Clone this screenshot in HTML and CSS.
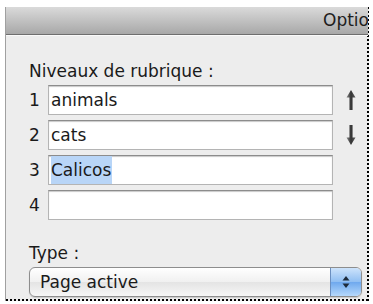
FILE: index.html
```html
<!DOCTYPE html>
<html lang="fr">
<head>
    <meta charset="UTF-8">
    <meta name="viewport" content="width=device-width, initial-scale=1.0">
    <title>Options</title>
    <link rel="stylesheet" href="styles.css">
</head>
<body>
    <div class="frame">
        <div class="header">Options</div>
        <div class="panel">
            <p class="label">Niveaux de rubrique :</p>
            <div class="levels">
                <span class="num">1</span>
                <div class="field">animals</div>
                <svg class="arrow" width="10" height="22" viewBox="0 0 10 22">
                    <defs>
                        <linearGradient id="ag1" x1="0" x2="1" y1="0" y2="0">
                            <stop offset="0" stop-color="#8a8a8a"/>
                            <stop offset="0.5" stop-color="#333"/>
                            <stop offset="1" stop-color="#5e5e5e"/>
                        </linearGradient>
                    </defs>
                    <path d="M5 1 L9.5 8.5 L6.6 8.5 L6.6 21 L3.4 21 L3.4 8.5 L0.5 8.5 Z" fill="url(#ag1)"/>
                </svg>

                <span class="num">2</span>
                <div class="field">cats</div>
                <svg class="arrow" width="10" height="22" viewBox="0 0 10 22">
                    <path d="M5 21 L9.5 13.5 L6.6 13.5 L6.6 1 L3.4 1 L3.4 13.5 L0.5 13.5 Z" fill="url(#ag1)"/>
                </svg>

                <span class="num">3</span>
                <div class="field"><span class="selected">Calicos</span></div>
                <span></span>

                <span class="num">4</span>
                <div class="field"></div>
                <span></span>
            </div>

            <p class="label type-label">Type :</p>
            <div class="select">
                <span class="select-text">Page active</span>
                <span class="stepper">
                    <svg width="10" height="16" viewBox="0 0 10 16">
                        <path d="M5 2 L8.5 6.5 L1.5 6.5 Z" fill="#1d2a3a"/>
                        <path d="M5 14 L8.5 9.5 L1.5 9.5 Z" fill="#1d2a3a"/>
                    </svg>
                </span>
            </div>
        </div>
    </div>
</body>
</html>
```

FILE: styles.css
```css
body {
    margin: 0;
    background-color: #fff;
    font-family: "DejaVu Sans", "Liberation Sans", sans-serif;
    color: #1a1a1a;
}
.frame {
    margin: 7px 0 0 5px;
    width: 364px;
    height: 294px;
    box-sizing: border-box;
    border-left: 1px solid #a0a0a0;
    overflow: hidden;
    background:
        repeating-linear-gradient(to bottom, #000 0 2px, transparent 2px 4px) right top / 2px 100% no-repeat,
        repeating-linear-gradient(to right, #000 0 2px, transparent 2px 4px) left bottom / 100% 2px no-repeat,
        #ededed;
}
.header {
    height: 27px;
    line-height: 27px;
    padding-left: 317px;
    margin-right: 1px;
    overflow: hidden;
    white-space: nowrap;
    font-size: 17px;
    color: #1e1e1e;
    background: linear-gradient(#dadada, #a8a8a8);
    border-bottom: 1px solid #6e6e6e;
    box-shadow: 0 1px 0 #fafafa;
}
.panel {
    padding: 26px 0 0 23px;
}
.label {
    margin: 0;
    font-size: 17px;
    line-height: 20px;
}
.levels {
    display: grid;
    grid-template-columns: 19px 285px 36px;
    grid-auto-rows: 30px;
    row-gap: 5px;
    align-items: center;
    margin-top: 4px;
}
.num {
    font-size: 17px;
}
.field {
    height: 30px;
    box-sizing: border-box;
    border: 1px solid #b4b4b4;
    border-top-color: #8c8c8c;
    box-shadow: inset 0 1px 1px #c9c9c9;
    background-color: #fff;
    font-size: 17px;
    line-height: 28px;
    padding-left: 2px;
}
.selected {
    background-color: #b8d5f7;
    padding: 4px 1px 4px 0;
}
.arrow {
    justify-self: center;
}
.type-label {
    margin-top: 23px;
}
.select {
    display: flex;
    align-items: stretch;
    width: 333px;
    height: 30px;
    margin-top: 4px;
    box-sizing: border-box;
    border: 1px solid #8d8d8d;
    border-radius: 6px;
    overflow: hidden;
    background: linear-gradient(#ffffff, #f0f0f0 50%, #e4e4e4 51%, #f6f6f6);
    box-shadow: 0 1px 1px #c8c8c8;
}
.select-text {
    flex: 1;
    font-size: 17px;
    line-height: 28px;
    padding-left: 10px;
}
.stepper {
    width: 30px;
    display: flex;
    align-items: center;
    justify-content: center;
    border-left: 1px solid #6b8fc0;
    background: linear-gradient(#cde3fb, #8fbef2 50%, #6fa9ee 51%, #b5d8fb);
}
```
